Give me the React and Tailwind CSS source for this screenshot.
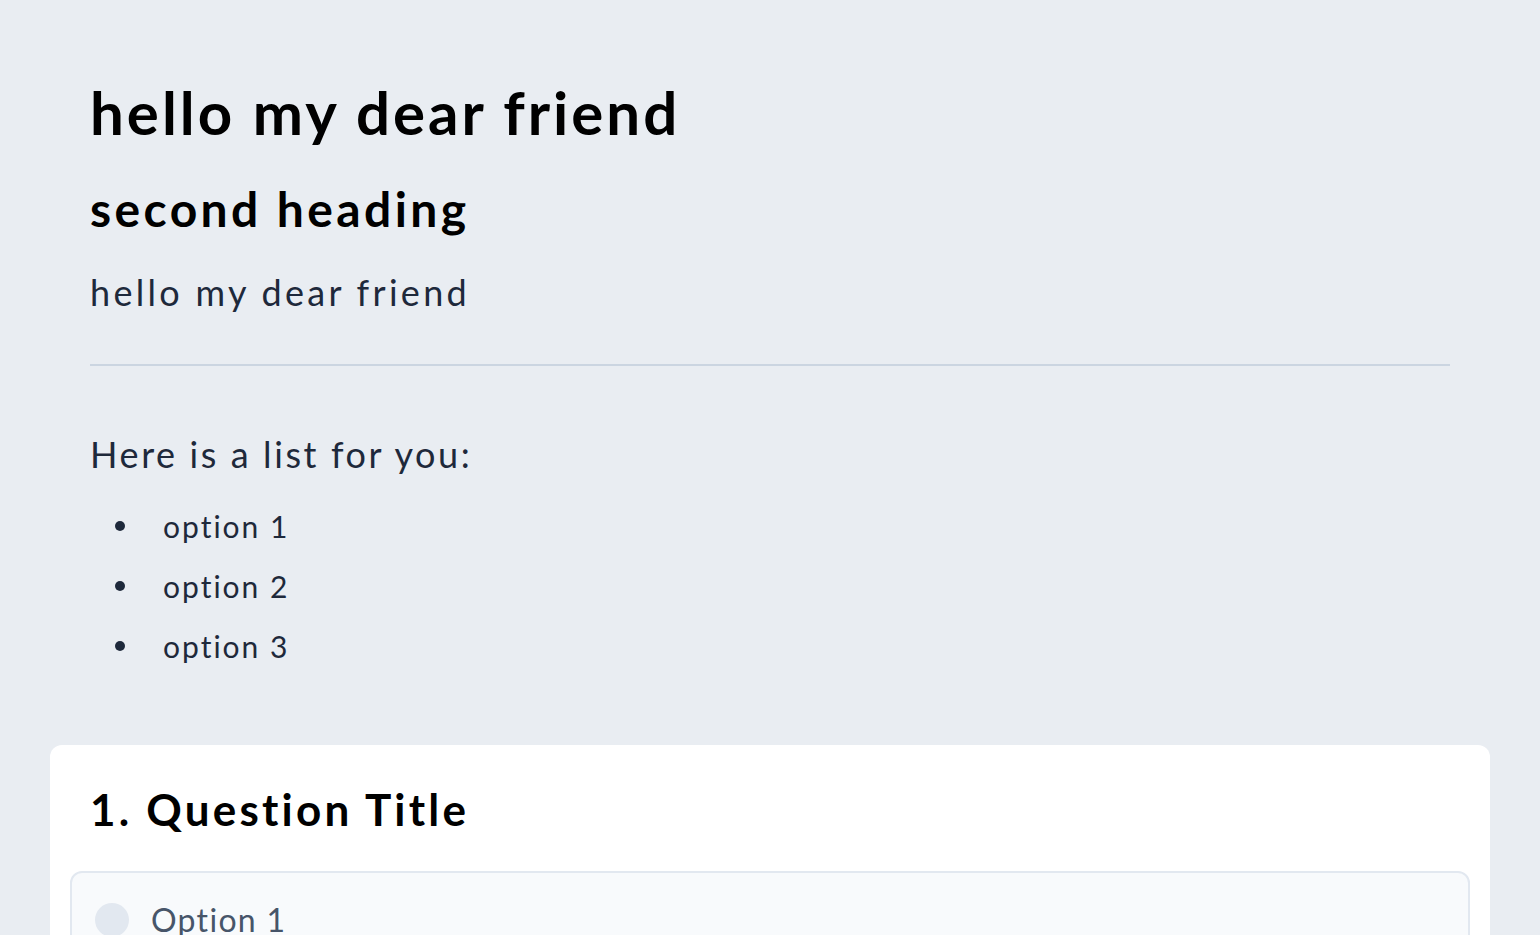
const options = ["option 1", "option 2", "option 3"];

export default function App() {
  return (
    <div className="min-h-screen w-full bg-[#e9edf2] px-[50px] pt-[76px] font-['Lato','Noto_Sans',sans-serif]">
      {/* Intro text */}
      <div className="px-[40px]">
        <h1 className="text-[60px] leading-[72px] font-bold tracking-[3px] text-black">hello my dear friend</h1>
        <h2 className="mt-[33px] text-[48px] leading-[56px] font-bold tracking-[3.4px] text-black">second heading</h2>
        <p className="mt-[31px] text-[36px] leading-[48px] tracking-[3.3px] text-[#1e293b]">hello my dear friend</p>
        <hr className="mt-[48px] border-t-2 border-[#cbd5e1]" />
        <p className="mt-[64px] text-[36px] leading-[48px] tracking-[2.6px] text-[#1e293b]">Here is a list for you:</p>
        <ul className="mt-[18px] text-[30px] leading-[60px] tracking-[2px] text-[#1e293b]">
          {options.map((o) => (
            <li key={o} className="flex items-center">
              <span className="ml-[25px] mr-[38px] h-[10px] w-[10px] rounded-full bg-[#1e293b]" />
              {o}
            </li>
          ))}
        </ul>
      </div>

      {/* Question card */}
      <div className="mt-[69px] rounded-t-xl bg-white px-[20px] pt-[36px] pb-[20px]">
        <h3 className="px-[20px] text-[44px] leading-[56px] font-bold tracking-[3.2px] text-black">1. Question Title</h3>
        <div className="mt-[34px] flex items-center gap-[22px] rounded-xl border-2 border-[#e2e8f0] bg-[#f8fafc] px-[23px] py-[29px]">
          <span className="h-[34px] w-[34px] shrink-0 rounded-full bg-[#e2e8f0]" />
          <span className="text-[32px] leading-[36px] tracking-[1.3px] text-[#475569]">Option 1</span>
        </div>
      </div>
    </div>
  );
}
